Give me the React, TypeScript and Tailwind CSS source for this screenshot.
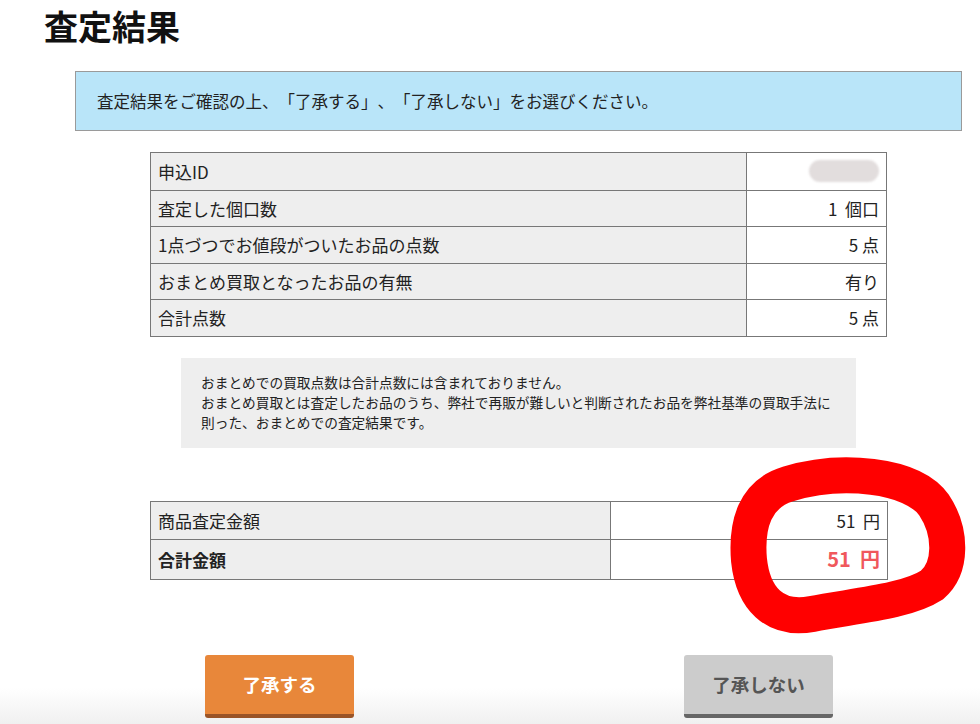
import React from 'react';

const jp = { fontFamily: '"Hiragino Sans", "Noto Sans CJK JP", "Liberation Sans", sans-serif' };

type Row = { label: string; value: React.ReactNode };

const summaryRows: Row[] = [
  { label: '申込ID', value: <span className="inline-block w-[70px] h-[22px] rounded-full bg-[#e2dddd] blur-[1px]" /> },
  { label: '査定した個口数', value: '1  個口' },
  { label: '1点づつでお値段がついたお品の点数', value: '5 点' },
  { label: 'おまとめ買取となったお品の有無', value: '有り' },
  { label: '合計点数', value: '5 点' },
];

function RedCircle() {
  // hand-drawn marker circle around the total
  return (
    <svg className="absolute left-0 top-0 pointer-events-none" width="980" height="724" viewBox="0 0 980 724">
      <path
        d="M788 484 C 840 468, 912 474, 934 505 C 952 532, 952 568, 932 585 C 906 602, 852 606, 812 614 C 774 621, 753 598, 749 560 C 746 524, 755 494, 788 484 Z"
        fill="none"
        stroke="#ff0000"
        strokeWidth="36"
        strokeLinejoin="round"
      />
    </svg>
  );
}

export default function App() {
  return (
    <div
      className="relative w-[980px] h-[724px] overflow-hidden bg-gradient-to-b from-white from-[95%] to-[#f0f0f0] text-[#222] [text-spacing-trim:space-all]"
      style={jp}
    >
      <h1 className="ml-[44px] pt-[6px] text-[34px] leading-[39px] font-bold text-[#111]">査定結果</h1>

      <div className="ml-[75px] mt-[26px] w-[887px] h-[60px] border border-[#9a9a9a] bg-[#b9e5f9] flex items-center pl-[21px] text-[16.5px] text-[#222]">
        査定結果をご確認の上、「了承する」、「了承しない」をお選びください。
      </div>

      <div className="ml-[150px] mt-[21px] w-[737px] border border-[#777]">
        {summaryRows.map((r, i) => (
          <div key={i} className={`grid grid-cols-[596px_1fr] h-[36.6px] ${i > 0 ? 'border-t border-[#777]' : ''}`}>
            <div className="bg-[#eeeeee] border-r border-[#777] flex items-center pl-[7px] text-[17px]">{r.label}</div>
            <div className="bg-white flex items-center justify-end pr-[7px] text-[17px] whitespace-pre">{r.value}</div>
          </div>
        ))}
      </div>

      <div className="ml-[181px] mt-[21px] w-[675px] h-[90px] bg-[#eeeeee] pl-[20px] pt-[14px] text-[13.7px] leading-[20px] text-[#222]">
        <p>おまとめでの買取点数は合計点数には含まれておりません。</p>
        <p className="whitespace-nowrap">おまとめ買取とは査定したお品のうち、弊社で再販が難しいと判断されたお品を弊社基準の買取手法に</p>
        <p>則った、おまとめでの査定結果です。</p>
      </div>

      <div className="ml-[150px] mt-[53px] w-[738px] border border-[#777]">
        <div className="grid grid-cols-[460px_1fr] h-[37px]">
          <div className="bg-[#eeeeee] border-r border-[#777] flex items-center pl-[7px] text-[17px]">商品査定金額</div>
          <div className="bg-white flex items-center justify-end pr-[7px] text-[17px] whitespace-pre">51  円</div>
        </div>
        <div className="grid grid-cols-[460px_1fr] h-[40px] border-t border-[#777]">
          <div className="bg-[#eeeeee] border-r border-[#777] flex items-center pl-[7px] text-[17px] font-bold">合計金額</div>
          <div className="bg-white flex items-center justify-end pr-[7px] text-[20px] font-bold text-[#f0585c] whitespace-pre">51  円</div>
        </div>
      </div>

      <div className="mt-[75px] flex pl-[205px] gap-[330px]">
        <button className="w-[149px] h-[63px] rounded-[3px] bg-[#e8873a] border-b-[4px] border-[#9a5427] text-white text-[18.5px] font-bold">
          了承する
        </button>
        <button className="w-[149px] h-[63px] rounded-[3px] bg-[#cccccc] border-b-[4px] border-[#666] text-[#555] text-[18.5px] font-bold">
          了承しない
        </button>
      </div>

      <RedCircle />
    </div>
  );
}
